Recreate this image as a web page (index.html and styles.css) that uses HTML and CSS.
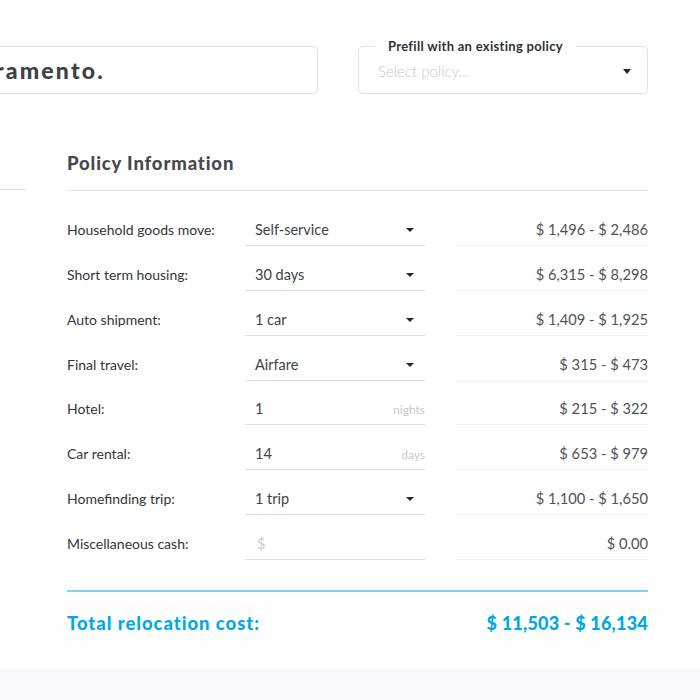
FILE: index.html
```html
<!DOCTYPE html>
<html>
<head>
<meta charset="utf-8">
<link rel="stylesheet" href="styles.css">
</head>
<body>
<div class="page">
  <div class="top">
    <div class="city-box"><span class="city-value">Sacramento.</span></div>
    <div class="policy-box">
      <span class="policy-legend">Prefill with an existing policy</span>
      <span class="policy-placeholder">Select policy...</span>
      <span class="caret"></span>
    </div>
  </div>
  <div class="main">
    <div class="left-panel"><div class="left-head"></div></div>
    <div class="content">
      <h2 class="section-title">Policy Information</h2>
      <div class="rows">
        <div class="label">Household goods move:</div>
        <div class="field"><span class="val">Self-service</span><span class="caret small"></span></div>
        <div class="amount">$ 1,496 - $ 2,486</div>

        <div class="label">Short term housing:</div>
        <div class="field"><span class="val">30 days</span><span class="caret small"></span></div>
        <div class="amount">$ 6,315 - $ 8,298</div>

        <div class="label">Auto shipment:</div>
        <div class="field"><span class="val">1 car</span><span class="caret small"></span></div>
        <div class="amount">$ 1,409 - $ 1,925</div>

        <div class="label">Final travel:</div>
        <div class="field"><span class="val">Airfare</span><span class="caret small"></span></div>
        <div class="amount">$ 315 - $ 473</div>

        <div class="label">Hotel:</div>
        <div class="field"><span class="val">1</span><span class="unit">nights</span></div>
        <div class="amount">$ 215 - $ 322</div>

        <div class="label">Car rental:</div>
        <div class="field"><span class="val">14</span><span class="unit">days</span></div>
        <div class="amount">$ 653 - $ 979</div>

        <div class="label">Homefinding trip:</div>
        <div class="field"><span class="val">1 trip</span><span class="caret small"></span></div>
        <div class="amount">$ 1,100 - $ 1,650</div>

        <div class="label">Miscellaneous cash:</div>
        <div class="field"><span class="val placeholder">$</span></div>
        <div class="amount">$ 0.00</div>
      </div>
      <div class="total">
        <span class="total-label">Total relocation cost:</span>
        <span>$ 11,503 - $ 16,134</span>
      </div>
    </div>
  </div>
  <div class="band"></div>
</div>
</body>
</html>
```

FILE: styles.css
```css
* { box-sizing: border-box; }
html, body { margin: 0; padding: 0; background: #ffffff; }
body {
  font-family: Lato, "Noto Sans", sans-serif;
  color: #3b3e42;
  width: 700px;
  height: 700px;
  overflow: hidden;
}
.page { width: 700px; overflow: hidden; }

.top {
  display: flex;
  gap: 40px;
  padding: 46px 52px 0 0;
}
.city-box {
  flex: 0 0 338px;
  margin-left: -20px;
  height: 48px;
  border: 1px solid #dde2e6;
  border-radius: 5px;
  display: flex;
  align-items: center;
  overflow: hidden;
}
.city-value {
  font-size: 23px;
  font-weight: 900;
  color: #3d4146;
  margin-left: -28px;
  letter-spacing: 2.2px;
  white-space: nowrap;
}
.policy-box {
  position: relative;
  flex: 1;
  height: 48px;
  border: 1px solid #dde2e6;
  border-radius: 5px;
  display: flex;
  align-items: center;
  justify-content: space-between;
  padding: 0 16px 0 19px;
}
.policy-legend {
  position: absolute;
  top: -8px;
  left: 16px;
  padding: 0 13px;
  background: #fff;
  font-size: 13px;
  font-weight: 700;
  line-height: 14px;
  color: #2f3236;
  letter-spacing: 0.3px;
}
.policy-placeholder {
  font-size: 15px;
  font-weight: 300;
  color: #c3cacf;
  padding-top: 2px;
}
.caret {
  width: 0;
  height: 0;
  border-left: 4.5px solid transparent;
  border-right: 4.5px solid transparent;
  border-top: 5px solid #25272a;
  margin-top: 3px;
}
.caret.small {
  border-left-width: 4px;
  border-right-width: 4px;
  border-top-width: 4px;
  margin-right: 11px;
  margin-top: 2px;
}

.main {
  display: flex;
  gap: 41px;
}
.left-panel { flex: 0 0 26px; }
.left-head {
  height: 96px;
  border-bottom: 1px solid #dde1e4;
}
.content { flex: 0 0 581px; }
.section-title {
  margin: 57px 0 0;
  padding-bottom: 15px;
  border-bottom: 1px solid #dde1e4;
  font-size: 18.5px;
  line-height: 24px;
  font-weight: 900;
  color: #45494e;
  letter-spacing: 0.85px;
}
.rows {
  margin-top: 22px;
  display: grid;
  grid-template-columns: 178px 180px 223px;
  row-gap: 11.86px;
}
.rows .amount { margin-left: 32px; }
.label {
  height: 33px;
  display: flex;
  align-items: center;
  font-size: 14px;
  color: #333538;
}
.field {
  height: 33px;
  border-bottom: 1px solid #dbe0e4;
  display: flex;
  align-items: center;
  justify-content: space-between;
  padding-left: 10px;
}
.val {
  font-size: 14.5px;
  color: #404346;
  padding-top: 1px;
}
.val.placeholder { color: #c8ced3; padding-left: 2px; }
.unit {
  font-size: 12px;
  color: #c5cbd0;
  padding-top: 3px;
}
.amount {
  height: 33px;
  border-bottom: 1px dotted #e4e7ea;
  display: flex;
  align-items: center;
  justify-content: flex-end;
  font-size: 14.7px;
  color: #505357;
}
.total {
  margin-top: 30px;
  border-top: 2px solid #7fd3f4;
  padding-top: 19px;
  display: flex;
  justify-content: space-between;
  font-size: 18px;
  line-height: 24px;
  font-weight: 900;
  color: #00a8e6;
  letter-spacing: 0.2px;
}
.total-label { letter-spacing: 0.95px; font-size: 18.5px; }
.band {
  margin-top: 34px;
  height: 40px;
  background: #f8f9fd;
}
```
